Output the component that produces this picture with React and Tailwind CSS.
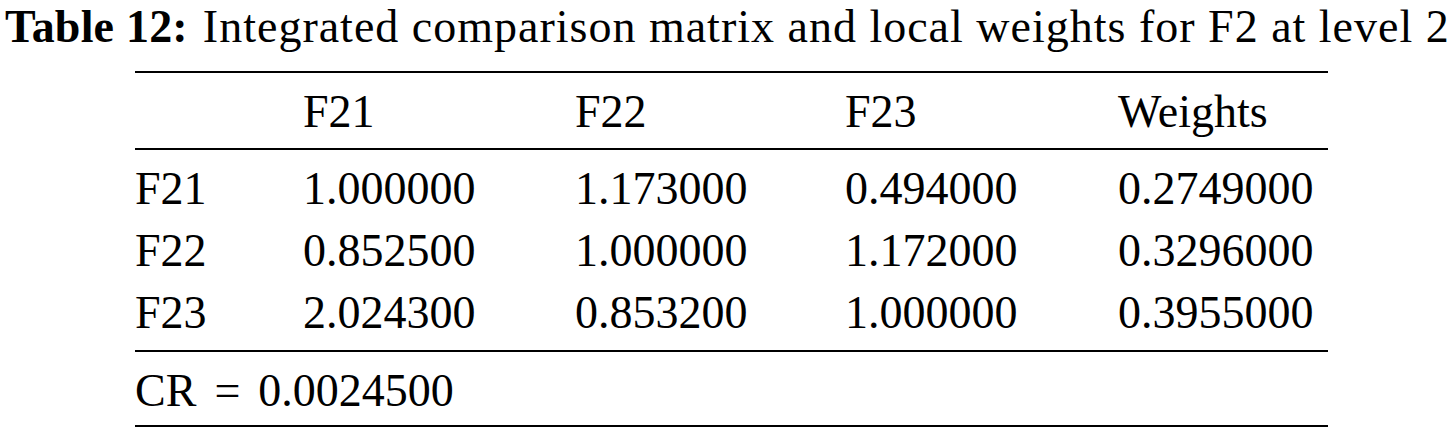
const HEAD = ["", "F21", "F22", "F23", "Weights"];

const ROWS = [
  ["F21", "1.000000", "1.173000", "0.494000", "0.2749000"],
  ["F22", "0.852500", "1.000000", "1.172000", "0.3296000"],
  ["F23", "2.024300", "0.853200", "1.000000", "0.3955000"],
];

const cols = "grid grid-cols-[168px_272px_270px_273px_1fr]";

function App() {
  return (
    <div className="bg-white w-[1450px] h-[433px] text-black font-['Liberation_Serif',serif] text-[46px] leading-[50px]">
      {/* caption */}
      <div className="pl-[5px] pt-[2px] whitespace-nowrap">
        <span className="font-bold tracking-[0.2px]">Table 12:</span>
        <span className="ml-[15px] tracking-[1px]">Integrated comparison matrix and local weights for F2 at level 2</span>
      </div>

      {/* table */}
      <div className="ml-[135px] mt-[19px] w-[1193px] border-t-2 border-b-2 border-black">
        <div className={`${cols} h-[77px] pt-[2px] items-center border-b-2 border-black`}>
          {HEAD.map((h, i) => (
            <div key={i}>{h}</div>
          ))}
        </div>

        <div className="pt-[8px] pb-[6px] border-b-2 border-black">
          {ROWS.map((row) => (
            <div key={row[0]} className={`${cols} h-[62px] items-center`}>
              {row.map((c, i) => (
                <div key={i}>{c}</div>
              ))}
            </div>
          ))}
        </div>

        <div className="h-[73px] pt-[4px] flex items-center">
          <span>CR</span>
          <span className="mx-[18px]">=</span>
          <span>0.0024500</span>
        </div>
      </div>
    </div>
  );
}

export default App;
